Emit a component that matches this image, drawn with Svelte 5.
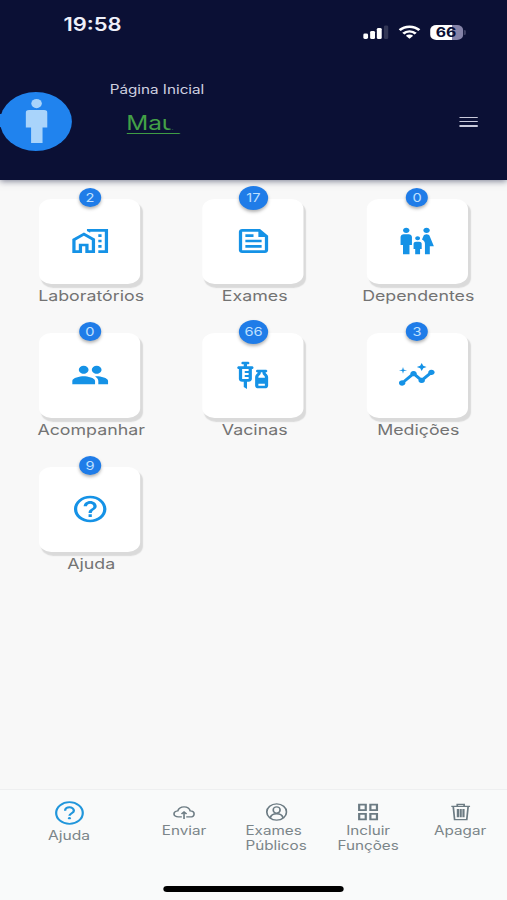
<script lang="ts">
  type Tile = { label: string; count: number; icon: string };

  const icons: Record<string, string> = {
    lab: "M17 15h2v2h-2zM17 11h2v2h-2zM17 7h2v2h-2zM10 3v1.51l2 1.33V5h9v14h-4v2h6V3zM8.17 5.7L1 10.48V21h6v-5h2v5h6V10.25zM13 19h-2v-5H5v5H3v-7.4l5.1-3.5 4.9 3.3z",
    feed: "M16 3H5c-1.1 0-2 .9-2 2v14c0 1.1.9 2 2 2h14c1.1 0 2-.9 2-2V8l-5-5zm3 16H5V5h10v4h4v10zM7 17h10v-2H7v2zm5-10H7v2h5V7zm-5 6h10v-2H7v2z",
    family: "M16 4c0-1.11.89-2 2-2s2 .89 2 2-.89 2-2 2-2-.89-2-2zm4 18v-6h2.5l-2.54-7.63C19.68 7.55 18.92 7 18.06 7h-.12c-.86 0-1.63.55-1.9 1.37l-.86 2.58c1.08.6 1.82 1.73 1.82 3.05v8h3zm-7.5-10.5c.83 0 1.5-.67 1.5-1.5s-.67-1.5-1.5-1.5S11 9.17 11 10s.67 1.5 1.5 1.5zM5.5 6c1.11 0 2-.89 2-2s-.89-2-2-2-2 .89-2 2 .89 2 2 2zm2 16v-7H9V9c0-1.1-.9-2-2-2H4c-1.1 0-2 .9-2 2v6h1.5v7h4zm6.5 0v-4h1v-4c0-.82-.68-1.5-1.5-1.5h-2c-.82 0-1.5.68-1.5 1.5v4h1v4h3z",
    people: "M16 11c1.66 0 2.99-1.34 2.99-3S17.66 5 16 5c-1.66 0-3 1.34-3 3s1.34 3 3 3zm-8 0c1.66 0 2.99-1.34 2.99-3S9.66 5 8 5C6.34 5 5 6.34 5 8s1.34 3 3 3zm0 2c-2.33 0-7 1.17-7 3.5V19h14v-2.5c0-2.33-4.67-3.5-7-3.5zm8 0c-.29 0-.62.02-.97.05 1.16.84 1.97 1.97 1.97 3.45V19h6v-2.5c0-2.33-4.67-3.5-7-3.5z",
    vaccine: "M11 5.5H8V4h.5c.55 0 1-.45 1-1s-.45-1-1-1h-3c-.55 0-1 .45-1 1s.45 1 1 1H6v1.5H3c-.55 0-1 .45-1 1s.45 1 1 1V15c0 1.1.9 2 2 2h1v4l2 1.5V17h1c1.1 0 2-.9 2-2V7.5c.55 0 1-.45 1-1s-.45-1-1-1zM9 9H7.25c-.41 0-.75.34-.75.75s.34.75.75.75H9V12H7.25c-.41 0-.75.34-.75.75s.34.75.75.75H9V15H5V7.5h4V9zm10.5 1.5V10c.55 0 1-.45 1-1s-.45-1-1-1h-5c-.55 0-1 .45-1 1s.45 1 1 1v.5c0 .5-1.5 1.16-1.5 3V20c0 1.1.9 2 2 2h4c1.1 0 2-.9 2-2v-6.5c0-1.84-1.5-2.5-1.5-3zm-3 0V10h1v.5c0 1.6 1.5 2 1.5 3v.5h-4v-.5c0-1 1.5-1.4 1.5-3zm2.5 9.5h-4v-1.5h4V20z",
    insights: "M21 8c-1.45 0-2.26 1.44-1.93 2.51l-3.55 3.56c-.3-.09-.74-.09-1.04 0l-2.55-2.55C12.27 10.45 11.46 9 10 9c-1.45 0-2.27 1.44-1.93 2.52l-4.56 4.55C2.44 15.74 1 16.55 1 18c0 1.1.9 2 2 2 1.45 0 2.26-1.44 1.93-2.51l4.55-4.56c.3.09.74.09 1.04 0l2.55 2.55C12.73 16.55 13.54 18 15 18c1.45 0 2.27-1.44 1.93-2.52l3.56-3.55c1.07.33 2.51-.48 2.51-1.93 0-1.1-.9-2-2-2zM15 9l.94-2.07L18 6l-2.06-.93L15 3l-.92 2.07L12 6l2.08.93zM3.5 11L4 9l2-.5L4 8l-.5-2L3 8l-2 .5L3 9z",
    help: "M11 18h2v-2h-2v2zm1-16C6.48 2 2 6.48 2 12s4.48 10 10 10 10-4.48 10-10S17.52 2 12 2zm0 18c-4.41 0-8-3.59-8-8s3.59-8 8-8 8 3.59 8 8-3.59 8-8 8zm0-14c-2.21 0-4 1.79-4 4h2c0-1.1.9-2 2-2s2 .9 2 2c0 2-3 1.75-3 5h2c0-2.25 3-2.5 3-5 0-2.21-1.79-4-4-4z",
  };

  const tiles: Tile[] = [
    { label: "Laboratórios", count: 2, icon: "lab" },
    { label: "Exames", count: 17, icon: "feed" },
    { label: "Dependentes", count: 0, icon: "family" },
    { label: "Acompanhar", count: 0, icon: "people" },
    { label: "Vacinas", count: 66, icon: "vaccine" },
    { label: "Medições", count: 3, icon: "insights" },
    { label: "Ajuda", count: 9, icon: "help" },
  ];
</script>

<div class="screen">
  <header>
    <div class="status">
      <span class="time">19:58</span>
      <div class="status-icons">
        <svg class="signal" viewBox="0 0 21 14">
          <rect x="0" y="8.5" width="4" height="5.5" rx="1.4" />
          <rect x="5.7" y="6" width="4" height="8" rx="1.3" />
          <rect x="11.2" y="3" width="4" height="11" rx="1.3" />
          <rect x="17" y="0.5" width="3.6" height="13.5" rx="1.3" opacity="0.16" />
        </svg>
        <svg class="wifi" viewBox="0 0 18 14">
          <g fill="none" stroke="#fff" stroke-width="2.4">
            <path d="M0.9 5.2C5.4 0.5 12.6 0.5 17.1 5.2" />
            <path d="M3.9 8.6C6.8 5.6 11.2 5.6 14.1 8.6" />
          </g>
          <path d="M6 10.8c1.7-1.7 4.3-1.7 6 0L9 13.8z" />
        </svg>
        <div class="battery"><span>66</span></div>
      </div>
    </div>

    <div class="bar">
      <div class="avatar">
        <svg viewBox="0 0 22 44" preserveAspectRatio="none">
          <ellipse cx="11" cy="4.6" rx="5.3" ry="4.6" />
          <path d="M3.5 11h15a3.5 3 0 0 1 3.5 3v14.5h-5V44H5.5V28.500H0V14a3.500 3 0 0 1 3.500-3z" />
        </svg>
      </div>
      <div class="titles">
        <div class="page">Página Inicial</div>
        <div class="user"><span>Mau</span></div>
      </div>
      <button class="menu" aria-label="Menu"><i></i><i></i><i></i></button>
    </div>
  </header>

  <main>
    {#each tiles as tile}
      <div class="tile">
        <div class="card">
          <span class="badge" class:big={tile.count > 9}>{tile.count}</span>
          <svg viewBox="0 0 24 24"><path d={icons[tile.icon]} /></svg>
        </div>
        <div class="label">{tile.label}</div>
      </div>
    {/each}
  </main>

  <nav>
    <div class="item first">
      <svg viewBox="2 2 20 20">
        <circle cx="12" cy="12" r="9.1" fill="none" stroke="#2196db" stroke-width="1.5" />
        <path d="M9 10.100c0-3.900 6-3.800 6 0 0 2-3 2.100-3 4.200" fill="none" stroke="#2196db" stroke-width="1.6" />
        <circle cx="12" cy="16.300" r="1" fill="#2196db" />
      </svg>
      <span>Ajuda</span>
    </div>
    <div class="item">
      <svg viewBox="0 0 19 18">
        <path d="M7.6 14.2H4.6C2.4 14.2 0.8 12.9 0.8 11c0-1.9 1.5-3 3.3-3.2C4.700 5.400 6.900 3.500 9.500 3.500c2.900 0 4.900 1.900 5.300 4.400 2 .1 3.400 1.300 3.400 3.100 0 2-1.600 3.200-3.500 3.200h-3.300" />
        <path d="M9.5 16.500V9.200M7.300 11.100L9.500 8.900l2.200 2.200" />
      </svg>
      <span>Enviar</span>
    </div>
    <div class="item">
      <svg viewBox="0 0 18 18">
        <circle cx="9" cy="9" r="8.1" />
        <ellipse cx="9" cy="7" rx="2.8" ry="3.100" />
        <path d="M3.800 14.800c.5-2.500 2.400-4 5.200-4s4.700 1.500 5.200 4" />
      </svg>
      <span class="left">Exames<br />Públicos</span>
    </div>
    <div class="item">
      <svg viewBox="0 0 18 18">
        <path d="M1.700 1.700h5.400v5.400H1.700zM10.900 1.700h5.400v5.400h-5.400zM1.700 10.900h5.400v5.400H1.700zM10.900 10.900h5.400v5.400h-5.400z" stroke-width="1.8" />
      </svg>
      <span>Incluir<br />Funções</span>
    </div>
    <div class="item">
      <svg viewBox="0 0 18 18">
        <path d="M1.300 3.400h15.400M6.200 3.200V1.400h5.600v1.800M2.900 3.600l1.100 13h10l1.100-13" />
        <path d="M6.700 6v8.300M9 6v8.300M11.300 6v8.300" stroke-width="1.8" />
      </svg>
      <span>Apagar</span>
    </div>
  </nav>
  <div class="home-indicator"></div>
</div>

<style>
  :global(body) {
    margin: 0;
    overflow: hidden;
    background: #f9fafa;
  }

  /* 416px layout stretched to the full 507px window */
  .screen {
    width: 416px;
    height: 900px;
    display: flex;
    flex-direction: column;
    transform: scaleX(1.21875);
    transform-origin: 0 0;
    overflow: hidden;
    background: #f9fafa;
    font-family: Inter, "Liberation Sans", sans-serif;
  }

  svg {
    display: block;
  }

  header {
    position: relative;
    flex: none;
    height: 179.5px;
    background: #0b1035;
    box-shadow: 0 1px 6px rgba(11, 16, 53, 0.55);
    color: #fff;
  }

  .status {
    display: flex;
    justify-content: space-between;
    height: 64px;
    padding: 0 36.5px 0 52px;
  }

  .time {
    padding-top: 14px;
    color: #eef0fa;
    font-size: 18px;
    font-weight: 600;
    line-height: 22px;
  }

  .status-icons {
    display: flex;
    align-items: center;
    gap: 8px;
    height: 64px;
  }

  .status-icons svg {
    fill: #fff;
  }

  .signal {
    width: 21px;
    height: 14px;
  }

  .wifi {
    width: 18px;
    height: 14px;
  }

  .battery {
    position: relative;
    width: 27px;
    height: 15px;
    border-radius: 5px;
    background: linear-gradient(90deg, #fff 66%, #8583a8 66%);
    color: #0b1035;
    font-size: 13px;
    font-weight: 700;
    line-height: 15px;
    text-align: center;
  }

  .battery::after {
    content: "";
    position: absolute;
    right: -2.5px;
    top: 5px;
    width: 1.5px;
    height: 5px;
    border-radius: 0 2px 2px 0;
    background: #5c5c7e;
  }

  .bar {
    display: flex;
    align-items: flex-start;
    padding-top: 17px;
  }

  .avatar {
    position: relative;
    display: flex;
    justify-content: center;
    width: 59px;
    height: 59px;
    margin-top: 11px;
    border-radius: 50%;
    background: #2083ee;
  }

  .avatar::before {
    content: "";
    position: absolute;
    left: 0;
    top: 22px;
    width: 4px;
    height: 13px;
    background: #2083ee;
  }

  .avatar svg {
    width: 18px;
    height: 44px;
    margin-top: 7px;
    fill: #a9d4fb;
  }

  .titles {
    flex: 1;
    padding-left: 31px;
  }

  .page {
    color: #cfd0e0;
    font-size: 12.5px;
    line-height: 18px;
  }

  .user {
    width: 46px;
    height: 24px;
    margin: 10px 0 0 13.5px;
    border-bottom: 1.5px solid #3f9c45;
    clip-path: polygon(0 0, 31px 0, 35px 19px, 41px 22px, 46px 26px, 0 26px);
    color: #43a047;
    font-size: 20px;
    line-height: 28px;
  }

  .menu {
    display: flex;
    flex-direction: column;
    gap: 2.5px;
    width: 14.5px;
    margin: 35.500px 24.5px 0 0;
    padding: 0;
    border: 0;
    background: none;
  }

  .menu i {
    height: 1.7px;
    background: #c9cadb;
  }

  main {
    flex: 1;
    display: grid;
    grid-template-columns: repeat(3, 83px);
    grid-auto-rows: 134px;
    column-gap: 51.2px;
    padding: 19px 0 0 32.3px;
    background: #f8f8f8;
  }

  .card {
    position: relative;
    display: flex;
    align-items: center;
    justify-content: center;
    width: 83px;
    height: 85px;
    border-radius: 10px;
    background: #fff;
    box-shadow: 2px 3.5px 1px #dadada;
  }

  .card svg {
    width: 32px;
    height: 32px;
    fill: #1592e6;
  }

  .badge {
    position: absolute;
    top: -10.5px;
    left: 50%;
    width: 18px;
    height: 19px;
    margin-left: -9px;
    border-radius: 50%;
    background: #1f7ce8;
    box-shadow: 0 2px 3px rgba(0, 0, 0, 0.3);
    color: #bfe0ff;
    font-size: 12px;
    line-height: 19px;
    text-align: center;
  }

  .badge.big {
    top: -13px;
    width: 24px;
    height: 24px;
    margin-left: -12px;
    line-height: 24px;
  }

  .label {
    margin: 3.5px -21px 0 -19px;
    color: #737373;
    font-size: 14.6px;
    line-height: 18px;
    text-align: center;
  }

  nav {
    flex: none;
    display: flex;
    height: 96px;
    border-top: 1px solid #eeeff0;
  }

  .item {
    display: flex;
    flex-direction: column;
    align-items: center;
    width: 75.5px;
    padding-top: 13px;
    color: #7b8589;
    font-size: 12.5px;
    line-height: 15px;
    text-align: center;
  }

  .item svg {
    width: 18px;
    height: 18px;
    margin-bottom: 2px;
    fill: none;
    stroke: #6c7b83;
    stroke-width: 1.4;
  }

  .item .left {
    text-align: left;
  }

  .item.first {
    width: 113.3px;
    padding-top: 11px;
    font-size: 12.8px;
  }

  .item.first svg {
    width: 24px;
    height: 24px;
    margin-bottom: 3px;
    stroke: none;
  }

  .home-indicator {
    flex: none;
    width: 148px;
    height: 5.5px;
    margin: 0 auto 8.5px;
    border-radius: 3px;
    background: #000;
  }
</style>
